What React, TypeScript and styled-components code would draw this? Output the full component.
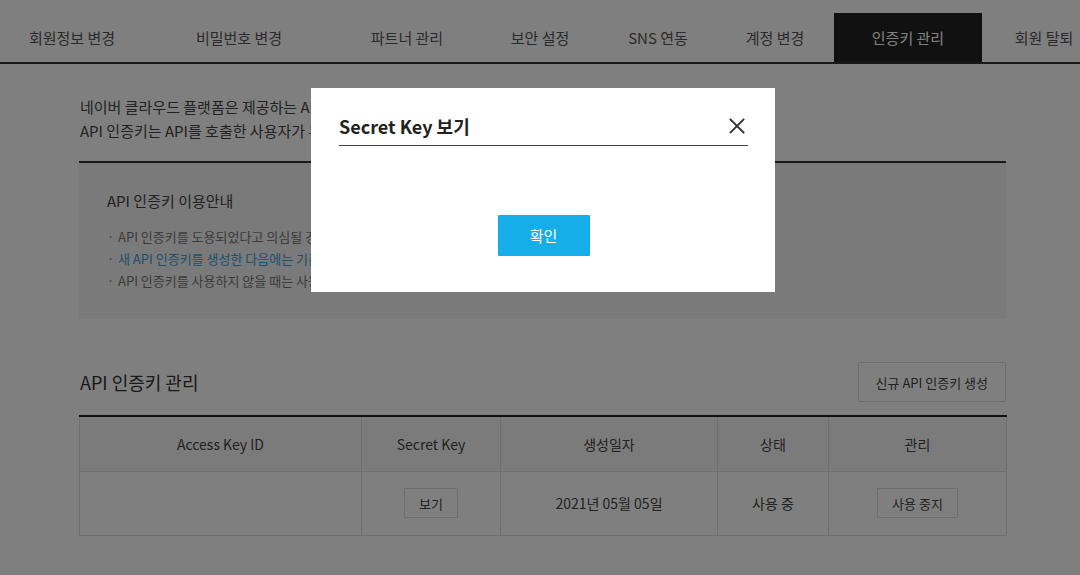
import React from "react";
import styled, { createGlobalStyle } from "styled-components";

const GlobalStyle = createGlobalStyle`
  * { box-sizing: border-box; }
  html, body { margin: 0; padding: 0; background: #ffffff; }
  body {
    font-family: "Noto Sans CJK KR", "Noto Sans", sans-serif;
    color: #444;
    overflow: hidden;
  }
`;

const Page = styled.div`
  width: 1080px;
  min-height: 575px;
  background: #fff;
`;

const Nav = styled.nav`
  margin-top: 13px;
  display: flex;
  flex-wrap: nowrap;
  overflow: hidden;
  border-bottom: 2px solid #333;
`;

const Tab = styled.div<{ $w: number; $active?: boolean }>`
  flex: 0 0 ${(p) => p.$w}px;
  height: 49px;
  display: flex;
  align-items: center;
  justify-content: center;
  font-size: 15px;
  white-space: nowrap;
  color: ${(p) => (p.$active ? "#ffffff" : "#555")};
  background: ${(p) => (p.$active ? "#222" : "transparent")};
`;

const Content = styled.main`
  width: 927px;
  margin-left: 79px;
`;

const Intro = styled.p`
  margin: 31px 0 18px 1px;
  font-size: 15px;
  line-height: 24px;
  color: #444;
`;

const InfoBox = styled.section`
  border-top: 2px solid #333;
  background: #f4f4f4;
  padding: 27px 28px;
`;

const InfoTitle = styled.h3`
  margin: 0;
  font-size: 15px;
  font-weight: 400;
  line-height: 22px;
  color: #444;
`;

const InfoList = styled.ul`
  margin: 14px 0 0;
  padding: 0;
  list-style: none;
`;

const InfoItem = styled.li<{ $blue?: boolean }>`
  position: relative;
  padding-left: 11px;
  font-size: 13px;
  line-height: 22px;
  color: ${(p) => (p.$blue ? "#3a9fdc" : "#777")};
  &::before {
    content: "·";
    position: absolute;
    left: 0;
    top: 0;
    color: #777;
  }
`;

const SectionHead = styled.div`
  margin-top: 43px;
  display: flex;
  align-items: center;
  justify-content: space-between;
`;

const Heading = styled.h2`
  margin: 0 0 0 1px;
  font-size: 18px;
  font-weight: 400;
  line-height: 26px;
  color: #333;
`;

const OutlineButton = styled.button<{ $h?: number; $px?: number }>`
  height: ${(p) => p.$h ?? 30}px;
  padding: 0 ${(p) => p.$px ?? 14}px;
  border: 1px solid #dcdcdc;
  border-radius: 1px;
  background: #fff;
  font-family: inherit;
  font-size: 13px;
  color: #444;
  cursor: pointer;
`;

const Table = styled.table`
  margin-top: 13px;
  width: 927px;
  border-collapse: collapse;
  border-top: 2px solid #222;
  table-layout: fixed;
`;

const Th = styled.th`
  height: 55px;
  padding: 0;
  border: 1px solid #dedede;
  border-top: none;
  background: #f7f7f7;
  font-size: 14px;
  font-weight: 400;
  color: #444;
`;

const Td = styled.td`
  height: 64px;
  padding: 0;
  border: 1px solid #dedede;
  text-align: center;
  font-size: 14px;
  color: #444;
`;

const Overlay = styled.div`
  position: fixed;
  inset: 0;
  background: rgba(0, 0, 0, 0.5);
  z-index: 10;
`;

const Modal = styled.div`
  position: fixed;
  top: 88px;
  left: 311px;
  width: 464px;
  height: 204px;
  background: #fff;
  z-index: 11;
  padding: 25px 27px 36px 28px;
  display: flex;
  flex-direction: column;
`;

const ModalHeader = styled.div`
  display: flex;
  align-items: center;
  justify-content: space-between;
  padding-bottom: 6px;
  border-bottom: 1px solid #444;
`;

const ModalTitle = styled.h1`
  margin: 0;
  font-size: 18px;
  font-weight: 700;
  line-height: 26px;
  color: #222;
`;

const CloseButton = styled.button`
  width: 16px;
  height: 16px;
  margin-right: 3px;
  padding: 0;
  border: none;
  background: transparent;
  display: flex;
  align-items: center;
  justify-content: center;
  cursor: pointer;
`;

const ModalFooter = styled.div`
  margin-top: auto;
  display: flex;
  justify-content: center;
`;

const PrimaryButton = styled.button`
  width: 92px;
  height: 41px;
  border: none;
  border-radius: 1px;
  background: #15aee9;
  color: #fff;
  font-family: inherit;
  font-size: 15px;
  cursor: pointer;
`;

const tabs: { label: string; w: number; active?: boolean }[] = [
  { label: "회원정보 변경", w: 144 },
  { label: "비밀번호 변경", w: 190 },
  { label: "파트너 관리", w: 146 },
  { label: "보안 설정", w: 120 },
  { label: "SNS 연동", w: 116 },
  { label: "계정 변경", w: 118 },
  { label: "인증키 관리", w: 148, active: true },
  { label: "회원 탈퇴", w: 124 },
];

export default function App() {
  return (
    <>
      <GlobalStyle />
      <Page>
        <Nav>
          {tabs.map((t) => (
            <Tab key={t.label} $w={t.w} $active={t.active}>
              {t.label}
            </Tab>
          ))}
        </Nav>
        <Content>
          <Intro>
            네이버 클라우드 플랫폼은 제공하는 API 사용을 위해 인증키를 발급합니다.
            <br />
            API 인증키는 API를 호출한 사용자가 누구인지 확인하는 데 사용됩니다.
          </Intro>
          <InfoBox>
            <InfoTitle>API 인증키 이용안내</InfoTitle>
            <InfoList>
              <InfoItem>API 인증키를 도용되었다고 의심될 경우 새 인증키를 생성하세요.</InfoItem>
              <InfoItem $blue>새 API 인증키를 생성한 다음에는 기존 인증키를 중지하세요.</InfoItem>
              <InfoItem>API 인증키를 사용하지 않을 때는 사용 중지해 주세요.</InfoItem>
            </InfoList>
          </InfoBox>
          <SectionHead>
            <Heading>API 인증키 관리</Heading>
            <OutlineButton $h={40} $px={17}>신규 API 인증키 생성</OutlineButton>
          </SectionHead>
          <Table>
            <colgroup>
              <col style={{ width: 282 }} />
              <col style={{ width: 139 }} />
              <col style={{ width: 217 }} />
              <col style={{ width: 111 }} />
              <col style={{ width: 178 }} />
            </colgroup>
            <thead>
              <tr>
                <Th>Access Key ID</Th>
                <Th>Secret Key</Th>
                <Th>생성일자</Th>
                <Th>상태</Th>
                <Th>관리</Th>
              </tr>
            </thead>
            <tbody>
              <tr>
                <Td></Td>
                <Td>
                  <OutlineButton>보기</OutlineButton>
                </Td>
                <Td>2021년 05월 05일</Td>
                <Td>사용 중</Td>
                <Td>
                  <OutlineButton>사용 중지</OutlineButton>
                </Td>
              </tr>
            </tbody>
          </Table>
        </Content>
      </Page>
      <Overlay />
      <Modal role="dialog" aria-modal="true">
        <ModalHeader>
          <ModalTitle>Secret Key 보기</ModalTitle>
          <CloseButton aria-label="닫기">
            <svg width="16" height="16" viewBox="0 0 16 16">
              <path d="M1.5 1.5 L14.5 14.5 M14.5 1.5 L1.5 14.5" stroke="#333" strokeWidth="1.8" strokeLinecap="square" fill="none" />
            </svg>
          </CloseButton>
        </ModalHeader>
        <ModalFooter>
          <PrimaryButton>확인</PrimaryButton>
        </ModalFooter>
      </Modal>
    </>
  );
}
